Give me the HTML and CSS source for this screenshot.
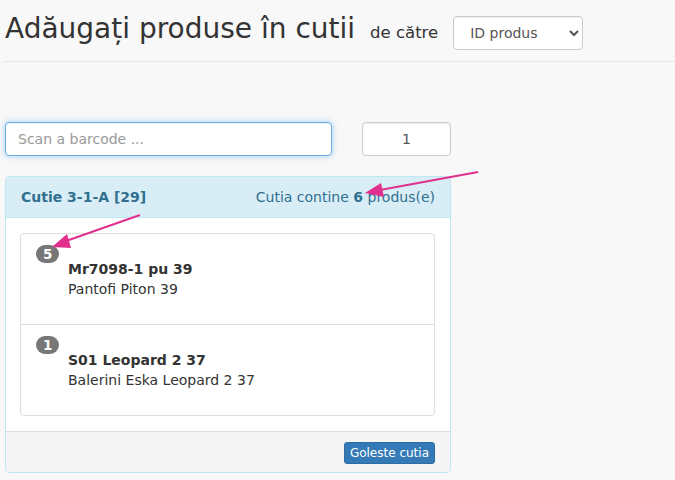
FILE: index.html
```html
<!DOCTYPE html>
<html lang="ro">
<head>
    <meta charset="UTF-8">
    <title>Adăugați produse în cutii</title>
    <link rel="stylesheet" href="styles.css">
</head>
<body>
    <div class="page">
        <div class="page-header">
            <h1 class="title">Adăugați produse în cutii</h1>
            <span class="by-label">de către</span>
            <select class="form-control by-select">
                <option>ID produs</option>
                <option>Cod bare</option>
            </select>
        </div>
        <hr class="divider">

        <div class="scan-row">
            <input type="text" class="form-control scan-input" placeholder="Scan a barcode ...">
            <input type="text" class="form-control qty-input" value="1">
        </div>

        <div class="panel">
            <div class="panel-heading">
                <span class="box-name">Cutie 3-1-A [29]</span>
                <span class="box-count">Cutia contine <b>6</b> produs(e)</span>
            </div>
            <div class="panel-body">
                <ul class="list-group">
                    <li class="list-group-item">
                        <span class="badge">5</span>
                        <div class="product">
                            <div class="product-code">Mr7098-1 pu 39</div>
                            <div class="product-name">Pantofi Piton 39</div>
                        </div>
                    </li>
                    <li class="list-group-item">
                        <span class="badge">1</span>
                        <div class="product">
                            <div class="product-code">S01 Leopard 2 37</div>
                            <div class="product-name">Balerini Eska Leopard 2 37</div>
                        </div>
                    </li>
                </ul>
            </div>
            <div class="panel-footer">
                <button class="btn btn-xs">Goleste cutia</button>
            </div>
        </div>
    </div>

    <svg class="annotations" width="675" height="480" viewBox="0 0 675 480">
        <line x1="478" y1="172" x2="380" y2="190" stroke="#e0318f" stroke-width="2.2"/>
        <polygon points="365,193 384,197 381,183" fill="#e0318f"/>
        <line x1="140" y1="215" x2="66" y2="241" stroke="#e0318f" stroke-width="2.2"/>
        <polygon points="52,247 71,248 67,234" fill="#e0318f"/>
    </svg>
</body>
</html>
```

FILE: styles.css
```css
body {
    margin: 0;
    background: #f8f8f8;
    font-family: "DejaVu Sans", sans-serif;
    font-size: 14px;
    line-height: 20px;
    color: #333;
}

.page {
    width: 446px;
    padding: 14px 0 0 5px;
}

.page-header {
    display: flex;
    align-items: baseline;
    width: 670px;
}

.title {
    margin: 0;
    font-size: 28px;
    line-height: 1.1;
    font-weight: normal;
    color: #333;
}

.by-label {
    margin-left: 15px;
    font-size: 16.5px;
    color: #333;
}

.form-control {
    box-sizing: border-box;
    height: 34px;
    padding: 6px 12px;
    font-family: "DejaVu Sans", sans-serif;
    font-size: 14px;
    line-height: 20px;
    color: #555;
    background: #fff;
    border: 1px solid #ccc;
    border-radius: 4px;
    box-shadow: inset 0 1px 1px rgba(0, 0, 0, .075);
}

.by-select {
    width: 130px;
    margin-left: 15px;
    padding-left: 12px;
}

.divider {
    width: 672px;
    margin: 11px 0 0 -2px;
    border: 0;
    border-top: 1px solid #e9e9e9;
}

.scan-row {
    display: flex;
    justify-content: space-between;
    margin-top: 60px;
}

.scan-input {
    width: 327px;
    border-color: #66afe9;
    box-shadow: inset 0 1px 1px rgba(0, 0, 0, .075), 0 0 6px rgba(102, 175, 233, .6);
}

.scan-input::placeholder {
    color: #999;
}

.qty-input {
    width: 89px;
    text-align: center;
}

.panel {
    margin-top: 20px;
    background: #fff;
    border: 1px solid #bce8f1;
    border-radius: 4px;
    overflow: hidden;
}

.panel-heading {
    display: flex;
    justify-content: space-between;
    padding: 10px 15px;
    background: #d9edf7;
    color: #31708f;
    border-bottom: 1px solid #bce8f1;
}

.box-name {
    font-weight: bold;
}

.panel-body {
    padding: 15px 15px 15px 14px;
}

.list-group {
    margin: 0;
    padding: 0;
    list-style: none;
}

.list-group-item {
    display: flex;
    flex-direction: column;
    align-items: flex-start;
    margin-bottom: -1px;
    padding: 11px 15px 25px;
    border: 1px solid #ddd;
}

.list-group-item:first-child {
    border-radius: 4px 4px 0 0;
}

.list-group-item:last-child {
    margin-bottom: 0;
    border-radius: 0 0 4px 4px;
}

.badge {
    display: inline-block;
    padding: 2px 7px;
    font-size: 13.5px;
    line-height: 14px;
    font-weight: bold;
    color: #fff;
    background: #777;
    border-radius: 9px;
}

.product {
    margin: -4px 0 0 32px;
}

.product-code {
    font-weight: bold;
}

.panel-footer {
    display: flex;
    justify-content: flex-end;
    padding: 10px 15px 8px;
    background: #f5f5f5;
    border-top: 1px solid #ddd;
}

.btn {
    font-family: "DejaVu Sans", sans-serif;
    cursor: pointer;
}

.btn-xs {
    padding: 1px 5px;
    font-size: 12px;
    line-height: 18px;
    color: #fff;
    background: #337ab7;
    border: 1px solid #2e6da4;
    border-radius: 3px;
}

.annotations {
    position: absolute;
    top: 0;
    left: 0;
    pointer-events: none;
}
```
